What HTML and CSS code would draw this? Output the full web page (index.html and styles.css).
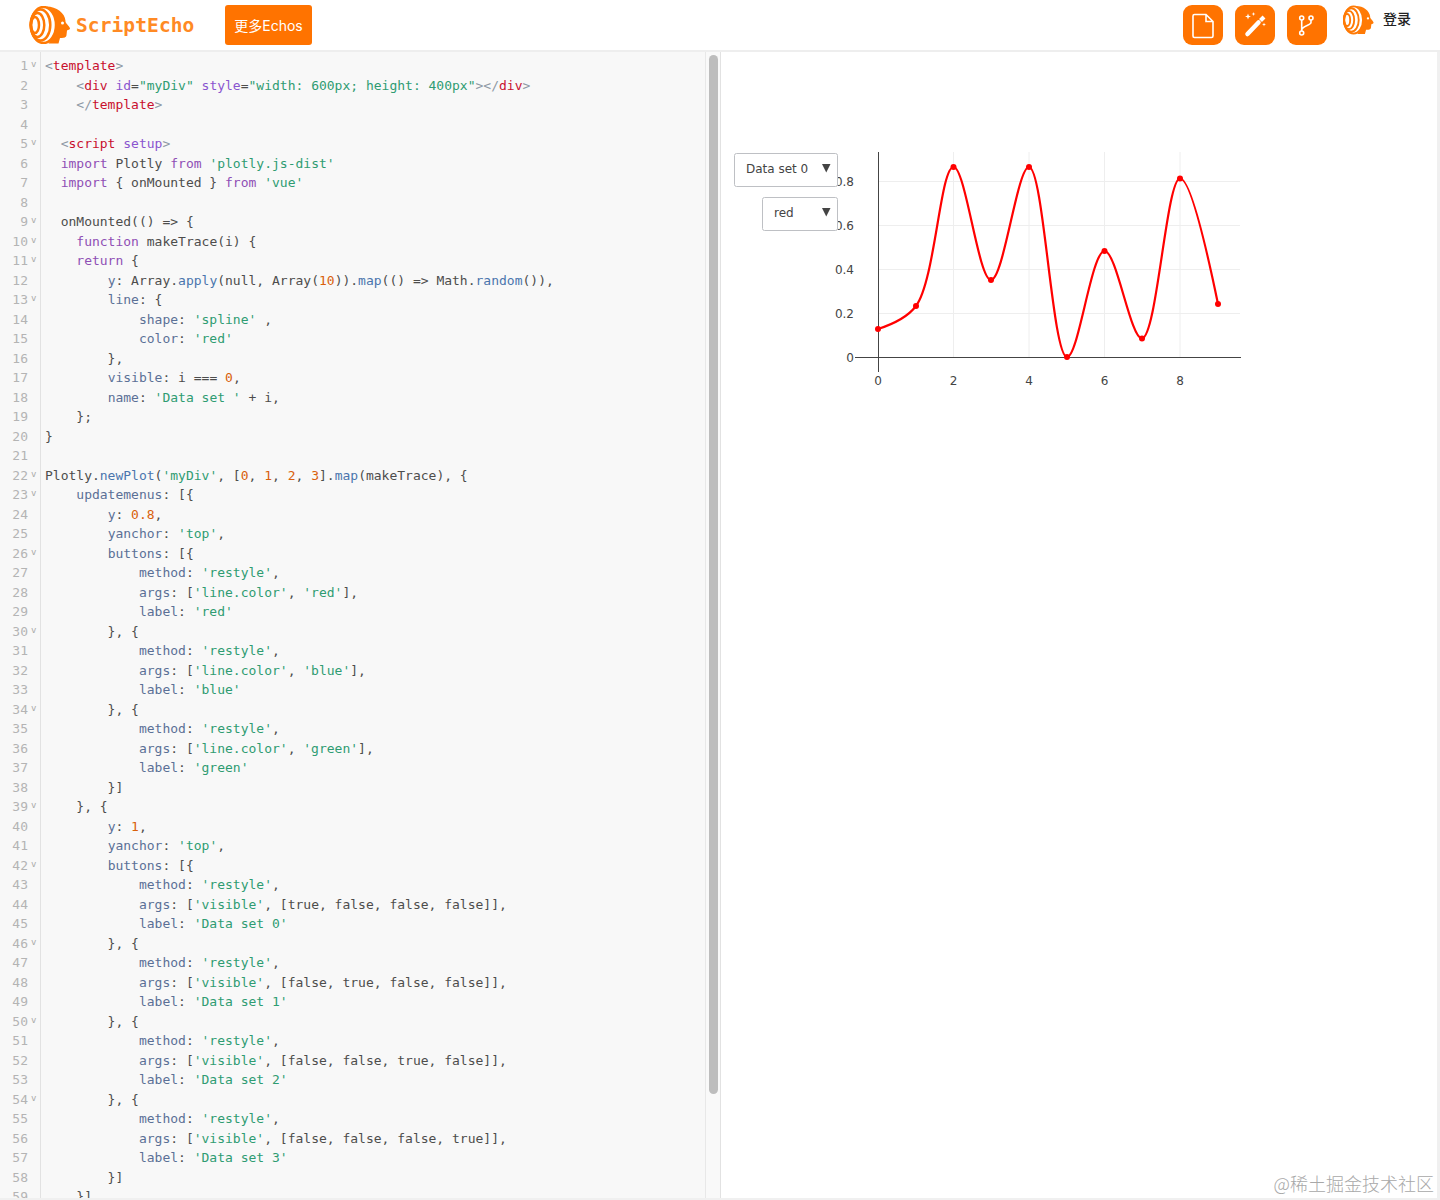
FILE: index.html
```html
<!DOCTYPE html>
<html lang="zh">
<head>
<meta charset="utf-8">
<title>ScriptEcho</title>
<link rel="stylesheet" href="styles.css">
</head>
<body>
<svg class="defs" width="0" height="0" aria-hidden="true">
  <symbol id="echo" viewBox="0 0 41 38">
    <g fill="none" stroke="#ff7a05" stroke-width="2.500">
      <ellipse cx="5.500" cy="19" rx="4" ry="8"/>
      <ellipse cx="8" cy="19" rx="6.800" ry="12"/>
      <ellipse cx="11" cy="19" rx="9.800" ry="15.500"/>
      <ellipse cx="14" cy="19" rx="12.500" ry="18"/>
    </g>
    <path fill="#ff7a05" d="M17 .5C27 .5 35.500 7 36 15L36 16C37 18 40.500 21 40.500 22.500C40.500 23.500 38.500 24 37.500 24.500L37 29C37 32 33 32 30.500 32L29 37.500L19 37.500C24.500 30 26.500 26 26.500 18C26.500 10 23.500 4 17 .5Z"/>
    <circle cx="33" cy="17" r="1.500" fill="#fff"/>
  </symbol>
</svg>

<header class="topbar">
  <a class="brand">
    <svg class="brand-logo"><use href="#echo"/></svg>
    <span class="brand-name">ScriptEcho</span>
  </a>
  <button class="more">更多Echos</button>
  <div class="actions">
    <button class="icon-btn">
      <svg viewBox="0 0 40 40" fill="none" stroke="#fff" stroke-width="1.600"><path d="M11.500 9.500H23L30 16.500V31A1.500 1.500 0 0 1 28.500 32.500H11.500A1.500 1.500 0 0 1 10 31V11A1.500 1.500 0 0 1 11.500 9.500ZM23 9.500V16.500H30"/></svg>
    </button>
    <button class="icon-btn">
      <svg viewBox="0 0 40 40" fill="#fff"><path d="M12.500 29L23.500 17.500" stroke="#fff" stroke-width="4.500" stroke-linecap="round"/><path d="M25.500 15.500L29 12" stroke="#fff" stroke-width="4"/><path d="M13 8.500l.8 2.200 2.200.8-2.200.8-.8 2.200-.8-2.200-2.200-.8 2.200-.8zM18.500 7l.5 1.500 1.500.5-1.500.5-.5 1.500-.5-1.500-1.500-.5 1.500-.5zM29 17.500l.5 1.500 1.500.5-1.500.5-.5 1.500-.5-1.500-1.500-.5 1.500-.5z"/></svg>
    </button>
    <button class="icon-btn">
      <svg viewBox="0 0 40 40" fill="none" stroke="#fff" stroke-width="1.600"><circle cx="14.700" cy="13" r="2"/><circle cx="24" cy="13" r="2"/><circle cx="14.700" cy="28" r="2"/><path d="M14.700 15V26M24 15V17.500C24 20.500 15 20.500 14.700 25"/></svg>
    </button>
    <svg class="user-logo"><use href="#echo"/></svg>
    <span class="login">登录</span>
  </div>
</header>

<main class="workspace">
  <section class="editor">
    <div class="code">
<div class="row"><span class="num fold">1</span><code><span class="g">&lt;</span><span class="t">template</span><span class="g">&gt;</span></code></div>
<div class="row"><span class="num">2</span><code>    <span class="g">&lt;</span><span class="t">div</span> <span class="a">id</span>=<span class="s">"myDiv"</span> <span class="a">style</span>=<span class="s">"width: 600px; height: 400px"</span><span class="g">&gt;&lt;/</span><span class="t">div</span><span class="g">&gt;</span></code></div>
<div class="row"><span class="num">3</span><code>    <span class="g">&lt;/</span><span class="t">template</span><span class="g">&gt;</span></code></div>
<div class="row"><span class="num">4</span><code></code></div>
<div class="row"><span class="num fold">5</span><code>  <span class="g">&lt;</span><span class="t">script</span> <span class="a">setup</span><span class="g">&gt;</span></code></div>
<div class="row"><span class="num">6</span><code>  <span class="k">import</span> Plotly <span class="k">from</span> <span class="s">'plotly.js-dist'</span></code></div>
<div class="row"><span class="num">7</span><code>  <span class="k">import</span> { onMounted } <span class="k">from</span> <span class="s">'vue'</span></code></div>
<div class="row"><span class="num">8</span><code></code></div>
<div class="row"><span class="num fold">9</span><code>  onMounted(() =&gt; {</code></div>
<div class="row"><span class="num fold">10</span><code>    <span class="k">function</span> makeTrace(i) {</code></div>
<div class="row"><span class="num fold">11</span><code>    <span class="k">return</span> {</code></div>
<div class="row"><span class="num">12</span><code>        <span class="p">y</span>: Array.<span class="f">apply</span>(null, Array(<span class="n">10</span>)).<span class="f">map</span>(() =&gt; Math.<span class="f">random</span>()),</code></div>
<div class="row"><span class="num fold">13</span><code>        <span class="p">line</span>: {</code></div>
<div class="row"><span class="num">14</span><code>            <span class="p">shape</span>: <span class="s">'spline'</span> ,</code></div>
<div class="row"><span class="num">15</span><code>            <span class="p">color</span>: <span class="s">'red'</span></code></div>
<div class="row"><span class="num">16</span><code>        },</code></div>
<div class="row"><span class="num">17</span><code>        <span class="p">visible</span>: i === <span class="n">0</span>,</code></div>
<div class="row"><span class="num">18</span><code>        <span class="p">name</span>: <span class="s">'Data set '</span> + i,</code></div>
<div class="row"><span class="num">19</span><code>    };</code></div>
<div class="row"><span class="num">20</span><code>}</code></div>
<div class="row"><span class="num">21</span><code></code></div>
<div class="row"><span class="num fold">22</span><code>Plotly.<span class="f">newPlot</span>(<span class="s">'myDiv'</span>, [<span class="n">0</span>, <span class="n">1</span>, <span class="n">2</span>, <span class="n">3</span>].<span class="f">map</span>(makeTrace), {</code></div>
<div class="row"><span class="num fold">23</span><code>    <span class="p">updatemenus</span>: [{</code></div>
<div class="row"><span class="num">24</span><code>        <span class="p">y</span>: <span class="n">0.8</span>,</code></div>
<div class="row"><span class="num">25</span><code>        <span class="p">yanchor</span>: <span class="s">'top'</span>,</code></div>
<div class="row"><span class="num fold">26</span><code>        <span class="p">buttons</span>: [{</code></div>
<div class="row"><span class="num">27</span><code>            <span class="p">method</span>: <span class="s">'restyle'</span>,</code></div>
<div class="row"><span class="num">28</span><code>            <span class="p">args</span>: [<span class="s">'line.color'</span>, <span class="s">'red'</span>],</code></div>
<div class="row"><span class="num">29</span><code>            <span class="p">label</span>: <span class="s">'red'</span></code></div>
<div class="row"><span class="num fold">30</span><code>        }, {</code></div>
<div class="row"><span class="num">31</span><code>            <span class="p">method</span>: <span class="s">'restyle'</span>,</code></div>
<div class="row"><span class="num">32</span><code>            <span class="p">args</span>: [<span class="s">'line.color'</span>, <span class="s">'blue'</span>],</code></div>
<div class="row"><span class="num">33</span><code>            <span class="p">label</span>: <span class="s">'blue'</span></code></div>
<div class="row"><span class="num fold">34</span><code>        }, {</code></div>
<div class="row"><span class="num">35</span><code>            <span class="p">method</span>: <span class="s">'restyle'</span>,</code></div>
<div class="row"><span class="num">36</span><code>            <span class="p">args</span>: [<span class="s">'line.color'</span>, <span class="s">'green'</span>],</code></div>
<div class="row"><span class="num">37</span><code>            <span class="p">label</span>: <span class="s">'green'</span></code></div>
<div class="row"><span class="num">38</span><code>        }]</code></div>
<div class="row"><span class="num fold">39</span><code>    }, {</code></div>
<div class="row"><span class="num">40</span><code>        <span class="p">y</span>: <span class="n">1</span>,</code></div>
<div class="row"><span class="num">41</span><code>        <span class="p">yanchor</span>: <span class="s">'top'</span>,</code></div>
<div class="row"><span class="num fold">42</span><code>        <span class="p">buttons</span>: [{</code></div>
<div class="row"><span class="num">43</span><code>            <span class="p">method</span>: <span class="s">'restyle'</span>,</code></div>
<div class="row"><span class="num">44</span><code>            <span class="p">args</span>: [<span class="s">'visible'</span>, [true, false, false, false]],</code></div>
<div class="row"><span class="num">45</span><code>            <span class="p">label</span>: <span class="s">'Data set 0'</span></code></div>
<div class="row"><span class="num fold">46</span><code>        }, {</code></div>
<div class="row"><span class="num">47</span><code>            <span class="p">method</span>: <span class="s">'restyle'</span>,</code></div>
<div class="row"><span class="num">48</span><code>            <span class="p">args</span>: [<span class="s">'visible'</span>, [false, true, false, false]],</code></div>
<div class="row"><span class="num">49</span><code>            <span class="p">label</span>: <span class="s">'Data set 1'</span></code></div>
<div class="row"><span class="num fold">50</span><code>        }, {</code></div>
<div class="row"><span class="num">51</span><code>            <span class="p">method</span>: <span class="s">'restyle'</span>,</code></div>
<div class="row"><span class="num">52</span><code>            <span class="p">args</span>: [<span class="s">'visible'</span>, [false, false, true, false]],</code></div>
<div class="row"><span class="num">53</span><code>            <span class="p">label</span>: <span class="s">'Data set 2'</span></code></div>
<div class="row"><span class="num fold">54</span><code>        }, {</code></div>
<div class="row"><span class="num">55</span><code>            <span class="p">method</span>: <span class="s">'restyle'</span>,</code></div>
<div class="row"><span class="num">56</span><code>            <span class="p">args</span>: [<span class="s">'visible'</span>, [false, false, false, true]],</code></div>
<div class="row"><span class="num">57</span><code>            <span class="p">label</span>: <span class="s">'Data set 3'</span></code></div>
<div class="row"><span class="num">58</span><code>        }]</code></div>
<div class="row"><span class="num">59</span><code>    }]</code></div>
    </div>
    <div class="scrolltrack"><div class="scrollthumb"></div></div>
  </section>

  <section class="preview">
    <svg class="plot" viewBox="721 52 716 360" width="716" height="360">
      <g class="grid">
        <path d="M878 181.500H1240M878 225.500H1240M878 269.500H1240M878 313.500H1240M953.500 152V357M1029 152V357M1104.500 152V357M1180 152V357"/>
      </g>
      <g class="ticks">
        <text x="854" y="186" text-anchor="end">0.8</text>
        <text x="854" y="230" text-anchor="end">0.6</text>
        <text x="854" y="274" text-anchor="end">0.4</text>
        <text x="854" y="318" text-anchor="end">0.2</text>
        <text x="854" y="362" text-anchor="end">0</text>
        <text x="878" y="385" text-anchor="middle">0</text>
        <text x="953.500" y="385" text-anchor="middle">2</text>
        <text x="1029" y="385" text-anchor="middle">4</text>
        <text x="1104.500" y="385" text-anchor="middle">6</text>
        <text x="1180" y="385" text-anchor="middle">8</text>
      </g>
      <path class="axis" d="M855 357.500H1241M878.500 152V372"/>
      <path class="trace" d="M878 329Q905.400 320.100 916 306C935.100 280.600 940.300 167.400 953.500 167C965.500 166.700 978.400 280 991 280C1003.600 280 1017.500 166.300 1029 167C1043.600 167.900 1052.200 356 1067 357C1078.300 357.800 1091.400 251.400 1104.500 251C1116.500 250.600 1130.700 339.500 1142 338.500C1156.800 337.200 1166.500 178.900 1180 178.500Q1192 178.100 1218 304"/>
      <g class="points">
        <circle cx="878" cy="329" r="3"/><circle cx="916" cy="306" r="3"/><circle cx="953.500" cy="167" r="3"/><circle cx="991" cy="280" r="3"/><circle cx="1029" cy="167" r="3"/><circle cx="1067" cy="357" r="3"/><circle cx="1104.500" cy="251" r="3"/><circle cx="1142" cy="338.500" r="3"/><circle cx="1180" cy="178.500" r="3"/><circle cx="1218" cy="304" r="3"/>
      </g>
      <g class="menu">
        <rect x="734.500" y="153.500" width="103" height="33" rx="2"/>
        <text x="746" y="173">Data set 0</text>
        <path d="M822 164H830.500L826.250 172.500Z"/>
        <rect x="762.500" y="197.500" width="75" height="33" rx="2"/>
        <text x="774" y="217">red</text>
        <path d="M822 208H830.500L826.250 216.500Z"/>
      </g>
    </svg>
  </section>
</main>
<div class="watermark">@稀土掘金技术社区</div>
</body>
</html>
```

FILE: styles.css
```css
* { box-sizing: border-box; }
html, body { margin: 0; padding: 0; height: 1200px; overflow: hidden; }
body { background: #f0f0f0; font-family: "Noto Sans", "Noto Sans CJK SC", sans-serif; position: relative; }
.defs { position: absolute; }
.topbar { display: flex; align-items: center; height: 52px; padding: 0 29px; background: #fff; border-bottom: 2px solid #eee; }
.brand { display: flex; align-items: center; gap: 5px; }
.brand-logo { width: 42px; height: 38px; display: block; }
.brand-name { font-family: "DejaVu Sans Mono", monospace; font-size: 19.500px; font-weight: 700; color: #ff8a24; letter-spacing: .1px; width: 120px; }
.more { margin-left: 29px; height: 40px; width: 87px; padding: 0; border: 0; border-radius: 3px; background: #ff7300; color: #fff; font-family: "Inter", "Noto Sans CJK SC", sans-serif; font-size: 14px; }
.actions { margin-left: auto; display: flex; align-items: center; gap: 12px; }
.icon-btn { width: 40px; height: 40px; padding: 0; border: 0; border-radius: 9px; background: #ff7300; }
.icon-btn svg { display: block; width: 40px; height: 40px; }
.user-logo { width: 31px; height: 30px; margin: -10px 0 0 4px; display: block; }
.login { font-family: "Noto Sans CJK SC", sans-serif; font-size: 14px; font-weight: 500; color: #222; margin: -14px 0 0 -3px; }
.workspace { display: flex; height: 1146px; background: #fff; margin-right: 3px; }
.editor { display: flex; width: 721px; height: 1146px; background: #f8f8f8; border-right: 1px solid #e2e2e2; overflow: hidden; }
.code { flex: 1; min-width: 0; height: 100%; overflow: hidden; padding-top: 4px; font-family: "DejaVu Sans Mono", monospace; font-size: 13px; line-height: 19.510px; color: #4d4d4c; background: linear-gradient(to right, transparent 40px, #e2e2e2 40px, #e2e2e2 41px, transparent 41px); }
.row { display: flex; height: 19.510px; white-space: pre; }
.num { position: relative; flex: 0 0 45px; padding-right: 17px; text-align: right; color: #b4b4b4; }
.fold::after { content: "v"; position: absolute; left: 31px; top: -1px; font-size: 9px; color: #aaa; }
code { font: inherit; }
.g { color: #8e98a5; }
.t { color: #c8102e; }
.a { color: #8a55cf; }
.s { color: #2f9c72; }
.k { color: #8f4fb5; }
.p { color: #5b7096; }
.f { color: #4a75ad; }
.n { color: #d9600c; }
.scrolltrack { flex: 0 0 15px; padding: 3px 2px 0 3px; background: #f9f9f9; border-left: 1px solid #e8e8e8; }
.scrollthumb { height: 1039px; border-radius: 5px; background: #bdbdbd; }
.preview { flex: 1; min-width: 0; background: #fff; }
.plot { display: block; }
.grid path { fill: none; stroke: #eee; stroke-width: 1; }
.ticks text, .menu text { font-family: "DejaVu Sans", sans-serif; font-size: 12px; fill: #444; }
.axis { fill: none; stroke: #444; stroke-width: 1; }
.trace { fill: none; stroke: #f00; stroke-width: 2.200; }
.points circle { fill: #f00; }
.menu rect { fill: #fff; stroke: #bec0c4; stroke-width: 1; }
.menu path { fill: #444; }
.watermark { position: absolute; right: 6px; bottom: 5px; font-family: "Noto Sans CJK SC", sans-serif; font-size: 18px; font-weight: 300; line-height: 24px; color: #a8a8a8; }
```
